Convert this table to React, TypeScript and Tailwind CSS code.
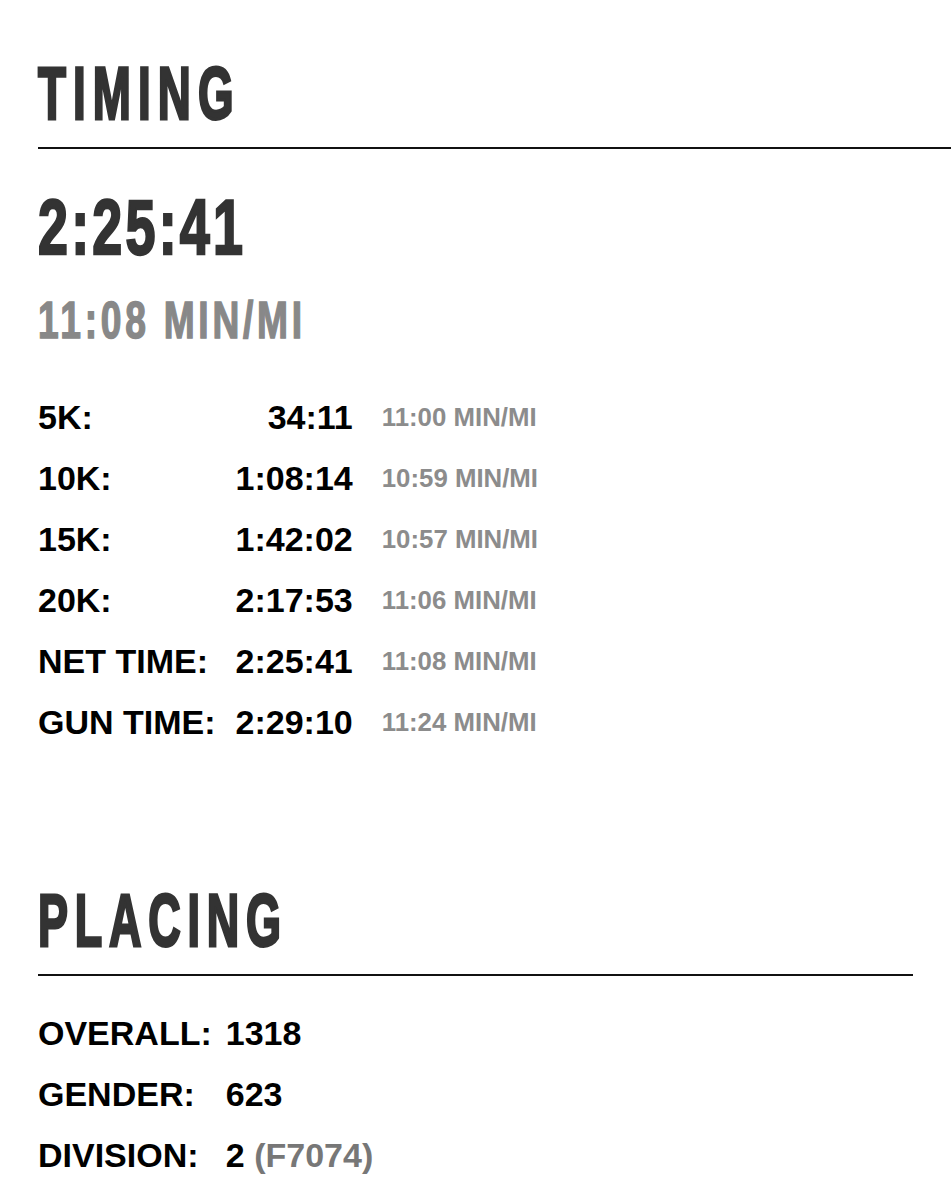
import React from "react";

const splits = [
  { label: "5K:", time: "34:11", pace: "11:00 MIN/MI" },
  { label: "10K:", time: "1:08:14", pace: "10:59 MIN/MI" },
  { label: "15K:", time: "1:42:02", pace: "10:57 MIN/MI" },
  { label: "20K:", time: "2:17:53", pace: "11:06 MIN/MI" },
  { label: "NET TIME:", time: "2:25:41", pace: "11:08 MIN/MI" },
  { label: "GUN TIME:", time: "2:29:10", pace: "11:24 MIN/MI" },
];

const places = [
  { label: "OVERALL:", value: "1318", extra: "" },
  { label: "GENDER:", value: "623", extra: "" },
  { label: "DIVISION:", value: "2", extra: "(F7074)" },
];

// no condensed face installed, so squeeze a bold sans horizontally
const squeeze = "inline-block origin-left font-bold whitespace-nowrap";

export default function App() {
  return (
    <div className="min-h-[1200px] bg-white pl-[38px] font-['Liberation_Sans',Arial,sans-serif] overflow-hidden">
      {/* timing */}
      <section className="pt-[56px]">
        <div className="border-b-2 border-[#111] pb-[16px]">
          <h2
            className={`${squeeze} scale-x-[0.61] text-[75px] leading-none text-[#333] tracking-[0.155em] [-webkit-text-stroke:3px_#333]`}
          >
            TIMING
          </h2>
        </div>

        <div className="mt-[39px]">
          <span
            className={`${squeeze} scale-x-[0.69] text-[78px] leading-none text-[#333] tracking-[0.06em] [-webkit-text-stroke:2.5px_#333]`}
          >
            2:25:41
          </span>
        </div>
        <div className="mt-[28px]">
          <span
            className={`${squeeze} scale-x-[0.715] text-[52px] leading-none text-[#888] tracking-[0.1em] [-webkit-text-stroke:1.5px_#888]`}
          >
            11:08 MIN/MI
          </span>
        </div>

        <div className="mt-[41px] grid grid-cols-[auto_auto_auto] justify-start items-start">
          {splits.map((s) => (
            <React.Fragment key={s.label}>
              <span className="text-[34px] leading-[61px] font-bold text-black">{s.label}</span>
              <span className="pl-[20px] text-right text-[34px] leading-[61px] font-bold text-black">
                {s.time}
              </span>
              <span className="pl-[29px] text-[25.8px] leading-[61px] font-bold text-[#8c8c8c]">{s.pace}</span>
            </React.Fragment>
          ))}
        </div>
      </section>

      {/* placing */}
      <section className="mt-[130px] mr-[38px]">
        <div className="border-b-2 border-[#111] pb-[16px]">
          <h2
            className={`${squeeze} scale-x-[0.6] text-[75px] leading-none text-[#333] tracking-[0.15em] [-webkit-text-stroke:3px_#333]`}
          >
            PLACING
          </h2>
        </div>

        <div className="mt-[27px] grid grid-cols-[auto_auto] justify-start items-baseline">
          {places.map((p) => (
            <React.Fragment key={p.label}>
              <span className="text-[34px] leading-[61px] font-bold text-black">{p.label}</span>
              <span className="pl-[14px] text-[34px] leading-[61px] font-bold text-black">
                {p.value}
                {p.extra && <span className="text-[#777]"> {p.extra}</span>}
              </span>
            </React.Fragment>
          ))}
        </div>
      </section>
    </div>
  );
}
